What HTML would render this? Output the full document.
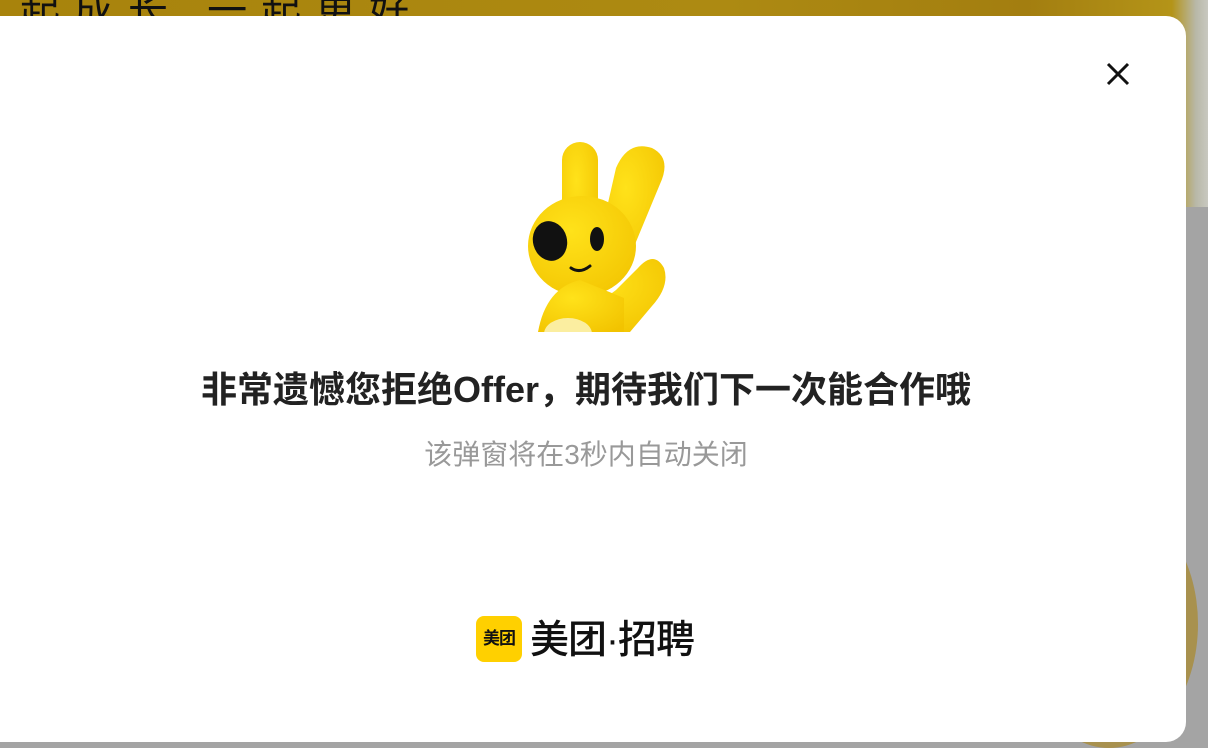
<!DOCTYPE html>
<html><head><meta charset="utf-8"><style>
html,body{margin:0;padding:0;width:1208px;height:748px;overflow:hidden;background:#a4a4a4;font-family:"Liberation Sans","Noto Sans CJK SC",sans-serif;position:relative;}
.top{position:absolute;left:0;top:0;width:1208px;height:207px;background:linear-gradient(90deg,#a8830c 0%,#ad8a12 60%,#a37e10 85%,#b49418 97%,#b8b8a8 99%,#c8c8c0 100%);}
.bgtxt{position:absolute;left:20px;top:-22px;font-size:40px;color:#111;letter-spacing:14px;}
.circ{position:absolute;left:1020px;top:500px;width:178px;height:248px;border-radius:50%;background:#a8914e;}
.modal{position:absolute;left:0;top:16px;width:1186px;height:726px;background:#fff;border-radius:0 20px 20px 0;}
.close{position:absolute;left:1104px;top:44px;}
.title{position:absolute;left:0;width:1172px;top:366px;text-align:center;font-size:36px;font-weight:bold;color:#222;line-height:48px;}
.sub{position:absolute;left:0;width:1172px;top:436px;text-align:center;font-size:28px;color:#999;line-height:38px;}
.logo{position:absolute;left:476px;top:616px;width:46px;height:46px;background:#ffd000;border-radius:8px;font-size:17px;font-weight:bold;color:#111;text-align:center;line-height:46px;letter-spacing:-1px;}
.logotxt{position:absolute;left:530px;top:616px;font-size:39px;color:#111;line-height:50px;font-weight:500;letter-spacing:-1px;}
</style></head><body>
<div class="top"><div class="bgtxt">起成长 一起更好</div></div>
<div class="circ"></div>
<div class="modal">
<svg class="close" width="28" height="28" viewBox="0 0 28 28"><path d="M4 4L24 24M24 4L4 24" stroke="#111" stroke-width="3" fill="none"/></svg>
</div>
<svg style="position:absolute;left:520px;top:138px" width="160" height="194" viewBox="0 0 160 194">
<defs><radialGradient id="g" cx="0.4" cy="0.35" r="0.8"><stop offset="0" stop-color="#ffe21a"/><stop offset="1" stop-color="#f2c300"/></radialGradient></defs>
<g fill="url(#g)">
<rect x="42" y="4" width="36" height="110" rx="18"/>
<path d="M96 30 Q108 2 132 10 Q152 20 140 46 L106 128 L80 100 Z"/>
<ellipse cx="62" cy="108" rx="54" ry="50"/>
<path d="M96 152 L118 130 Q134 112 144 130 Q150 148 132 168 L110 194 L40 194 Z"/>
<path d="M18 194 Q26 150 60 142 L104 160 L104 194 Z"/>
</g>
<ellipse cx="30" cy="103" rx="17" ry="20" fill="#111" transform="rotate(-15 30 103)"/>
<ellipse cx="77" cy="101" rx="7" ry="12" fill="#111"/>
<path d="M51 130 Q60 136 70 128" stroke="#111" stroke-width="3" fill="none" stroke-linecap="round"/>
<ellipse cx="48" cy="196" rx="24" ry="16" fill="#fbeea0"/>
</svg>
<div class="title">非常遗憾您拒绝Offer，期待我们下一次能合作哦</div>
<div class="sub">该弹窗将在3秒内自动关闭</div>
<div class="logo">美团</div>
<div class="logotxt">美团·招聘</div>
</body></html>
